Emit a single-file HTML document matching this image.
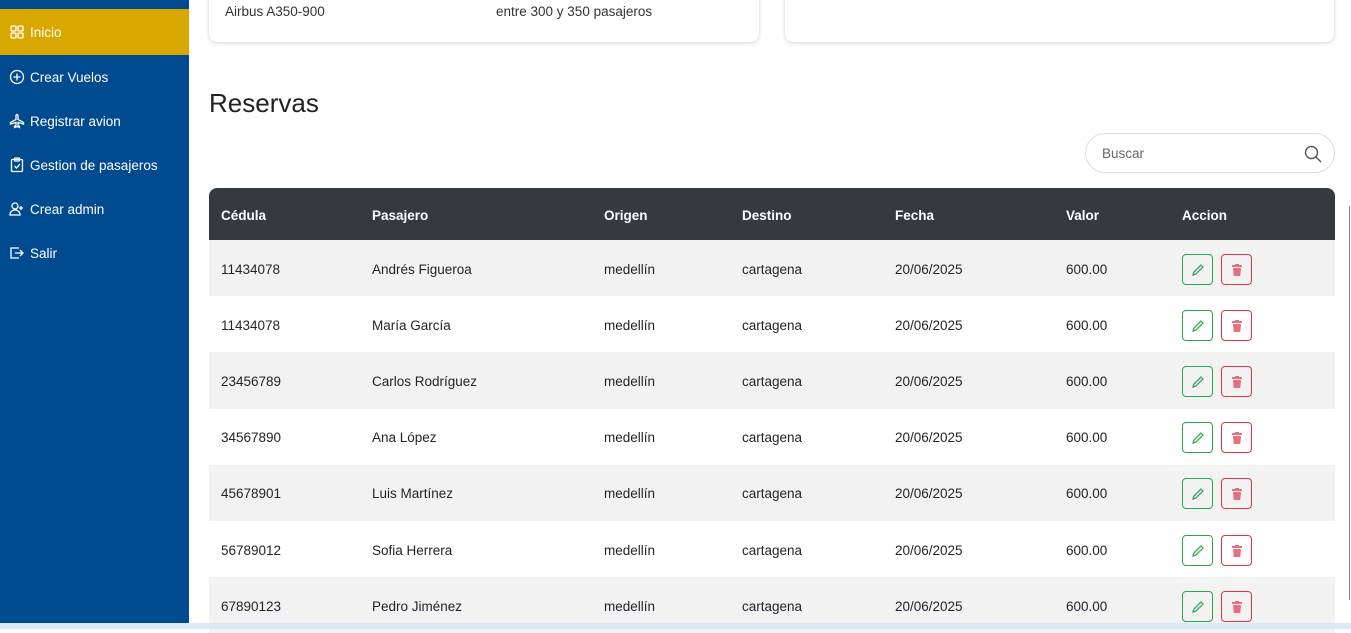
<!DOCTYPE html>
<html><head><meta charset="utf-8">
<style>
*{box-sizing:border-box;margin:0;padding:0}
body{width:1351px;height:629px;overflow:hidden;background:#fff;font-family:"Liberation Sans",sans-serif;font-size:13px;color:#212529;position:relative}
.side{position:absolute;left:0;top:0;width:189px;height:623px;background:#004a8f}
.item{position:absolute;left:0;width:189px;height:46px;color:#fff;font-size:13.5px;display:flex;align-items:center;padding-left:9px}
.item svg{width:16px;height:16px;margin-right:5px;fill:none;stroke:#fff;stroke-width:1.3}
.active{background:#d9a800}
.card{position:absolute;top:-10px;height:52px;background:#fff;border-radius:8px;box-shadow:0 1px 4px rgba(0,0,0,.18)}
h2{position:absolute;left:209px;top:88px;font-size:26px;font-weight:normal;color:#222}
.search{position:absolute;left:1085px;top:133px;width:250px;height:40px;border:1px solid #ddd;border-radius:20px;padding-left:16px;line-height:40px;color:#666;font-size:13.5px}
.search svg{position:absolute;right:12px;top:11px}
table{position:absolute;left:209px;top:188px;width:1126px;border-collapse:collapse}
th{background:#343a40;color:#fff;text-align:left;height:52px;font-size:13.5px;padding-left:12px;padding-top:2px}
th:first-child{border-top-left-radius:8px}th:last-child{border-top-right-radius:8px}
td{height:56.2px;padding-left:12px;font-size:13.5px;padding-top:2px}
tr:nth-child(even) td{background:#f2f2f2}
.b{display:inline-block;width:31px;height:31px;border-radius:4px;vertical-align:middle;margin-right:8px;position:relative}
.e{border:1px solid #28a745}.d{border:1px solid #dc3545}
.b svg{position:absolute;left:8px;top:8px}
</style></head><body>
<div class="side">
<div class="item active" style="top:9px"><svg viewBox="0 0 16 16"><rect x="2" y="2" width="5" height="5" rx="1"/><rect x="9" y="2" width="5" height="5" rx="1"/><rect x="2" y="9" width="5" height="5" rx="1"/><rect x="9" y="9" width="5" height="5" rx="1"/></svg>Inicio</div>
<div class="item" style="top:54px"><svg viewBox="0 0 16 16"><circle cx="8" cy="8" r="6.5"/><path d="M8 4.5v7M4.5 8h7"/></svg>Crear Vuelos</div>
<div class="item" style="top:98px"><svg viewBox="0 0 16 16"><path d="M8 1.5c1 0 1 1 1 2v3l5.5 3v1.5L9 9.5v2.5l1.5 1.5v1L8 13.5l-2.5 1v-1L7 12V9.5l-5.5 1.5V9.5L7 6.5v-3c0-1 0-2 1-2z"/></svg>Registrar avion</div>
<div class="item" style="top:142px"><svg viewBox="0 0 16 16"><rect x="2.5" y="2.5" width="11" height="12" rx="1"/><rect x="5.5" y="1" width="5" height="3" rx=".5"/><path d="M5.5 9l2 2 3.5-4"/></svg>Gestion de pasajeros</div>
<div class="item" style="top:186px"><svg viewBox="0 0 16 16"><circle cx="6" cy="5" r="3"/><path d="M1 14c0-3 2-5 5-5s5 2 5 5zM12 5v4M10 7h4"/></svg>Crear admin</div>
<div class="item" style="top:230px"><svg viewBox="0 0 16 16"><path d="M10 3H2v10h8M6 8h8M11 5l3 3-3 3"/></svg>Salir</div>
</div>
<div class="card" style="left:209px;width:550px"><span style="position:absolute;left:16px;top:14px;font-size:13.5px;color:#333">Airbus A350-900</span><span style="position:absolute;left:287px;top:14px;font-size:13.5px;color:#333">entre 300 y 350 pasajeros</span></div>
<div class="card" style="left:785px;width:549px"></div>
<h2>Reservas</h2>
<div class="search">Buscar<svg width="18" height="18" viewBox="0 0 18 18" fill="none" stroke="#555" stroke-width="1.4"><circle cx="7.5" cy="7.5" r="6"/><path d="M12 12l5 5"/></svg></div>
<table>
<tr><th style="width:151px">Cédula</th><th style="width:232px">Pasajero</th><th style="width:138px">Origen</th><th style="width:153px">Destino</th><th style="width:171px">Fecha</th><th style="width:116px">Valor</th><th>Accion</th></tr>
<tr><td>11434078</td><td>Andrés Figueroa</td><td>medellín</td><td>cartagena</td><td>20/06/2025</td><td>600.00</td><td><span class="b e"><svg width="14" height="14" viewBox="0 0 14 14" fill="none" stroke="#28a745" stroke-width="1.2"><path d="M2 12l1-3 7-7 2 2-7 7z"/></svg></span><span class="b d"><svg width="14" height="14" viewBox="0 0 14 14" fill="#e8707c"><rect x="2" y="2" width="10" height="2"/><rect x="5" y="1" width="4" height="1.5"/><path d="M3 5h8l-.7 8H3.7z"/></svg></span></td></tr>
<tr><td>11434078</td><td>María García</td><td>medellín</td><td>cartagena</td><td>20/06/2025</td><td>600.00</td><td><span class="b e"><svg width="14" height="14" viewBox="0 0 14 14" fill="none" stroke="#28a745" stroke-width="1.2"><path d="M2 12l1-3 7-7 2 2-7 7z"/></svg></span><span class="b d"><svg width="14" height="14" viewBox="0 0 14 14" fill="#e8707c"><rect x="2" y="2" width="10" height="2"/><rect x="5" y="1" width="4" height="1.5"/><path d="M3 5h8l-.7 8H3.7z"/></svg></span></td></tr>
<tr><td>23456789</td><td>Carlos Rodríguez</td><td>medellín</td><td>cartagena</td><td>20/06/2025</td><td>600.00</td><td><span class="b e"><svg width="14" height="14" viewBox="0 0 14 14" fill="none" stroke="#28a745" stroke-width="1.2"><path d="M2 12l1-3 7-7 2 2-7 7z"/></svg></span><span class="b d"><svg width="14" height="14" viewBox="0 0 14 14" fill="#e8707c"><rect x="2" y="2" width="10" height="2"/><rect x="5" y="1" width="4" height="1.5"/><path d="M3 5h8l-.7 8H3.7z"/></svg></span></td></tr>
<tr><td>34567890</td><td>Ana López</td><td>medellín</td><td>cartagena</td><td>20/06/2025</td><td>600.00</td><td><span class="b e"><svg width="14" height="14" viewBox="0 0 14 14" fill="none" stroke="#28a745" stroke-width="1.2"><path d="M2 12l1-3 7-7 2 2-7 7z"/></svg></span><span class="b d"><svg width="14" height="14" viewBox="0 0 14 14" fill="#e8707c"><rect x="2" y="2" width="10" height="2"/><rect x="5" y="1" width="4" height="1.5"/><path d="M3 5h8l-.7 8H3.7z"/></svg></span></td></tr>
<tr><td>45678901</td><td>Luis Martínez</td><td>medellín</td><td>cartagena</td><td>20/06/2025</td><td>600.00</td><td><span class="b e"><svg width="14" height="14" viewBox="0 0 14 14" fill="none" stroke="#28a745" stroke-width="1.2"><path d="M2 12l1-3 7-7 2 2-7 7z"/></svg></span><span class="b d"><svg width="14" height="14" viewBox="0 0 14 14" fill="#e8707c"><rect x="2" y="2" width="10" height="2"/><rect x="5" y="1" width="4" height="1.5"/><path d="M3 5h8l-.7 8H3.7z"/></svg></span></td></tr>
<tr><td>56789012</td><td>Sofia Herrera</td><td>medellín</td><td>cartagena</td><td>20/06/2025</td><td>600.00</td><td><span class="b e"><svg width="14" height="14" viewBox="0 0 14 14" fill="none" stroke="#28a745" stroke-width="1.2"><path d="M2 12l1-3 7-7 2 2-7 7z"/></svg></span><span class="b d"><svg width="14" height="14" viewBox="0 0 14 14" fill="#e8707c"><rect x="2" y="2" width="10" height="2"/><rect x="5" y="1" width="4" height="1.5"/><path d="M3 5h8l-.7 8H3.7z"/></svg></span></td></tr>
<tr><td>67890123</td><td>Pedro Jiménez</td><td>medellín</td><td>cartagena</td><td>20/06/2025</td><td>600.00</td><td><span class="b e"><svg width="14" height="14" viewBox="0 0 14 14" fill="none" stroke="#28a745" stroke-width="1.2"><path d="M2 12l1-3 7-7 2 2-7 7z"/></svg></span><span class="b d"><svg width="14" height="14" viewBox="0 0 14 14" fill="#e8707c"><rect x="2" y="2" width="10" height="2"/><rect x="5" y="1" width="4" height="1.5"/><path d="M3 5h8l-.7 8H3.7z"/></svg></span></td></tr>
</table>
<div style="position:absolute;left:1349px;top:206px;width:1px;height:394px;background:#888"></div>
<div style="position:absolute;left:0;top:623px;width:1351px;height:6px;background:#dde8f6"></div>
</body></html>
